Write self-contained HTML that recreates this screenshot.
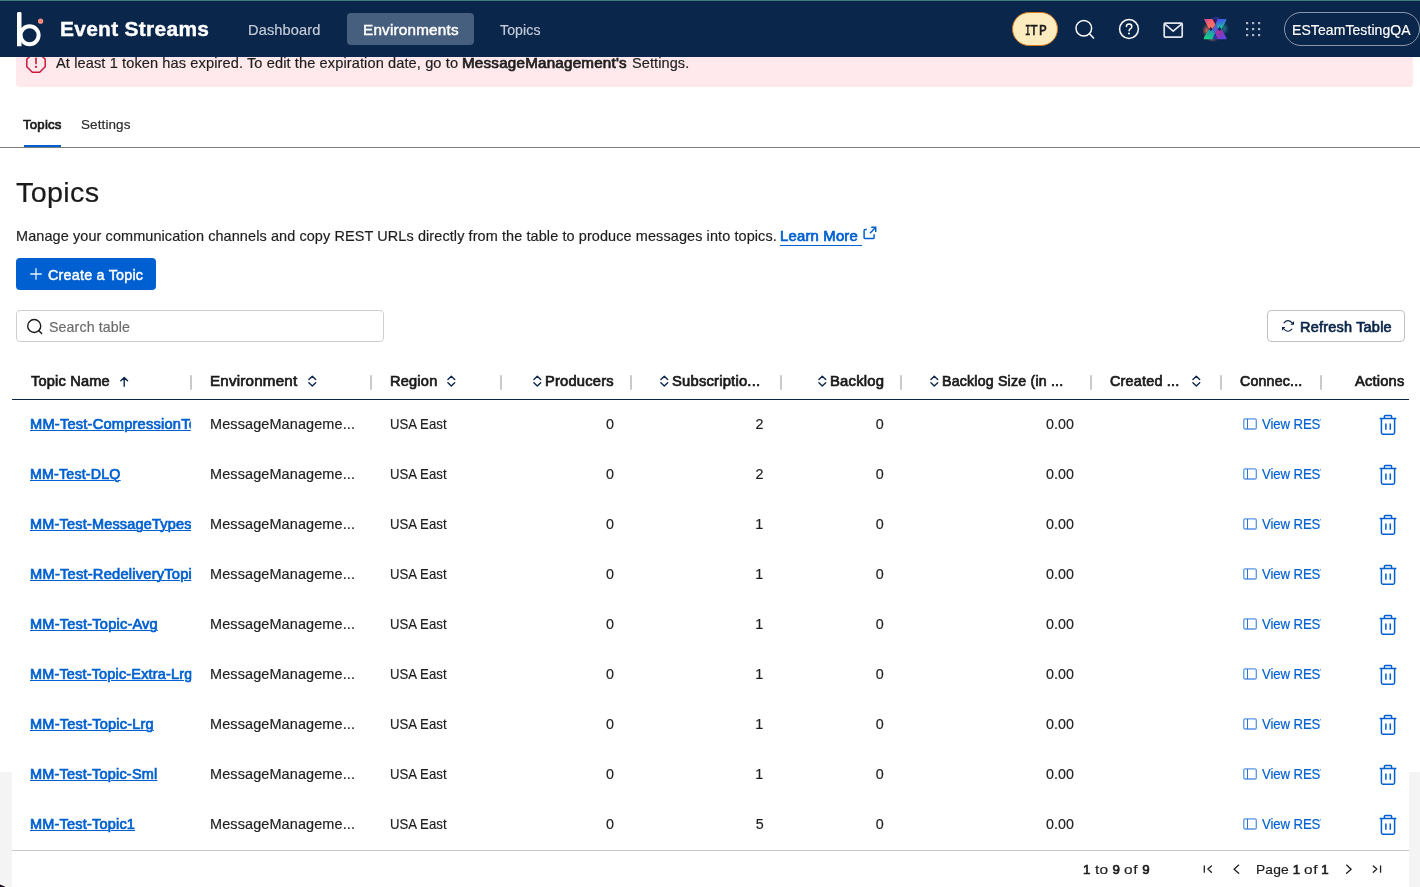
<!DOCTYPE html>
<html><head><meta charset="utf-8"><title>Event Streams</title>
<style>
html,body{margin:0;padding:0;}
body{width:1420px;height:887px;overflow:hidden;position:relative;background:#fff;font-family:'Liberation Sans', sans-serif;}
.t{position:absolute;white-space:nowrap;line-height:20px;height:20px;font-family:'Liberation Sans', sans-serif;}
.u{text-decoration:underline;text-decoration-thickness:1px;text-underline-offset:1px;}
.b{position:absolute;box-sizing:border-box;}
svg{position:absolute;overflow:visible;}
#root{position:absolute;left:0;top:0;width:1420px;height:887px;overflow:hidden;will-change:transform;}
</style></head><body><div id="root">
<!-- footer grey strip behind table -->
<div class="b" style="left:0;top:772px;width:1420px;height:115px;background:#f4f4f4;"></div>
<div class="b" style="left:-39.5px;top:883px;width:59px;height:59px;border-radius:50%;background:#1a0a1e;box-shadow:0 0 0 1.5px #fff;"></div>
<!-- table white area -->
<div class="b" style="left:12px;top:362px;width:1397px;height:525px;background:#fff;"></div>

<!-- alert banner -->
<div class="b" style="left:16px;top:40px;width:1397px;height:47px;background:#ffe9ec;border-radius:4px;"></div>
<svg style="left:26px;top:52.5px;" width="20" height="20" viewBox="0 0 20 20"><path d="M6.3 0.8h7.4l5.5 5.5v7.4l-5.5 5.5H6.3L0.8 13.7V6.3z" fill="none" stroke="#c9183a" stroke-width="1.5" stroke-linejoin="round"/><path d="M10 5.2v5.4" stroke="#c9183a" stroke-width="1.6" stroke-linecap="round"/><circle cx="10" cy="13.9" r="1.05" fill="#c9183a"/></svg>

<!-- header -->
<div class="b" style="left:0;top:0;width:1420px;height:56.5px;background:#0b264b;"></div>
<div class="b" style="left:0;top:0;width:1420px;height:1px;background:#3b7f80;"></div>
<div class="b" style="left:0;top:1px;width:1420px;height:1px;background:#0a2149;"></div>
<!-- logo b -->
<svg style="left:0;top:0;" width="60" height="56" viewBox="0 0 60 56"><path d="M17 13.4a1.4 1.4 0 0 1 1.4-1.5h1.7a1.4 1.4 0 0 1 1.4 1.4V46.2H17z" fill="#fff"/><circle cx="29.6" cy="35.3" r="9" fill="none" stroke="#fff" stroke-width="4"/><circle cx="40.6" cy="21.2" r="2.6" fill="#f58d7b"/></svg>
<!-- nav active pill -->
<div class="b" style="left:347px;top:13px;width:127px;height:32px;background:#475f7f;border-radius:4px;"></div>
<!-- ITP pill -->
<div class="b" style="left:1012px;top:12px;width:46px;height:34px;background:#fdecc0;border:1.5px solid #d4761a;border-radius:17px;"></div>
<!-- search icon -->
<svg style="left:1070px;top:15px;" width="28" height="28" viewBox="0 0 28 28"><circle cx="13.8" cy="13.2" r="7.8" fill="none" stroke="#fff" stroke-width="1.5"/><path d="M19.4 18.8L23.6 23" stroke="#fff" stroke-width="1.5" stroke-linecap="round"/></svg>
<!-- help icon -->
<svg style="left:1117px;top:17px;" width="24" height="24" viewBox="0 0 24 24"><circle cx="12" cy="12" r="9.4" fill="none" stroke="#fff" stroke-width="1.5"/><path d="M9.4 9.6c0-1.6 1.2-2.6 2.7-2.6 1.6 0 2.7 1 2.7 2.4 0 1.3-.8 1.9-1.6 2.4-.7.5-1.1.9-1.1 1.9" fill="none" stroke="#fff" stroke-width="1.5" stroke-linecap="round"/><circle cx="12" cy="16.6" r="1" fill="#fff"/></svg>
<!-- mail icon -->
<svg style="left:1161px;top:19px;" width="24" height="22" viewBox="0 0 24 22"><rect x="3.2" y="4.1" width="18" height="14" rx="1" fill="none" stroke="#e2e6ec" stroke-width="1.7"/><path d="M3.6 4.8l8.6 7.4 8.6-7.4" fill="none" stroke="#e2e6ec" stroke-width="1.7" stroke-linejoin="round"/></svg>
<!-- colorful X logo -->
<svg style="left:1193.8px;top:8.8px;" width="42.4" height="40.3" viewBox="-10 -10 42.4 40.3">
<defs>
<radialGradient id="gl1" cx="0.5" cy="0.5" r="0.5"><stop offset="0" stop-color="#ff7a55" stop-opacity="0.85"/><stop offset="0.5" stop-color="#ff7a55" stop-opacity="0.35"/><stop offset="1" stop-color="#ff7a55" stop-opacity="0"/></radialGradient>
<radialGradient id="gl2" cx="0.5" cy="0.5" r="0.5"><stop offset="0" stop-color="#2fb0b0" stop-opacity="0.55"/><stop offset="1" stop-color="#2fb0b0" stop-opacity="0"/></radialGradient>
<radialGradient id="gl3" cx="0.5" cy="0.5" r="0.5"><stop offset="0" stop-color="#4a55ff" stop-opacity="0.55"/><stop offset="1" stop-color="#4a55ff" stop-opacity="0"/></radialGradient>
<radialGradient id="gl4" cx="0.5" cy="0.5" r="0.5"><stop offset="0" stop-color="#ff7a55" stop-opacity="0.45"/><stop offset="1" stop-color="#ff7a55" stop-opacity="0"/></radialGradient>
<linearGradient id="xa" x1="0" y1="0" x2="0.8" y2="1"><stop offset="0" stop-color="#c63fa6"/><stop offset="0.45" stop-color="#f9636a"/><stop offset="1" stop-color="#ff7658"/></linearGradient>
<linearGradient id="xb" x1="0.2" y1="0" x2="0.6" y2="1"><stop offset="0" stop-color="#5340f0"/><stop offset="0.5" stop-color="#2e86cc"/><stop offset="1" stop-color="#16d68a"/></linearGradient>
<linearGradient id="xc" x1="0.9" y1="0" x2="0.2" y2="1"><stop offset="0" stop-color="#2f7fd6"/><stop offset="0.5" stop-color="#1fae9a"/><stop offset="1" stop-color="#14d882"/></linearGradient>
<linearGradient id="xd" x1="0.1" y1="0" x2="0.9" y2="1"><stop offset="0" stop-color="#c22f96"/><stop offset="0.5" stop-color="#8a38b4"/><stop offset="1" stop-color="#5548f2"/></linearGradient>
</defs>
<ellipse cx="2.6" cy="11.5" rx="4.6" ry="7" fill="url(#gl1)"/>
<ellipse cx="20.3" cy="9.5" rx="4.6" ry="6.5" fill="url(#gl2)"/>
<ellipse cx="12" cy="0.6" rx="6" ry="3.6" fill="url(#gl3)"/>
<ellipse cx="8.5" cy="20.2" rx="6" ry="3" fill="url(#gl4)"/>
<polygon points="8.4,0 13.5,0 11.2,5" fill="#3a1458"/>
<polygon points="8.4,20.3 13.5,20.3 11.2,15.2" fill="#1f3fae"/>
<polygon points="0,0 8.4,0 11.4,5.4 8.7,10 6.7,8.1 5,10.1" fill="url(#xa)"/>
<polygon points="13.5,0 22.4,0 22.4,1.2 17.7,10 15.6,8.1 13.9,10 11.4,5.4" fill="url(#xb)"/>
<polygon points="0,20.3 0,18.6 5,10.1 6.7,12 8.7,10 11.2,14.3 8.4,20.3" fill="url(#xc)"/>
<polygon points="13.5,20.3 22.4,20.3 22.4,19 17.7,10 15.6,12 13.9,10 11.2,14.3" fill="url(#xd)"/>
<polygon points="11.4,5.4 13.9,10 11.2,14.3 8.7,10" fill="#5d5cd8"/>
<polygon points="6.7,8.1 7.9,10 6.7,12 5.5,10" fill="#3a2348"/>
<polygon points="15.6,8.1 16.8,10 15.6,12 14.4,10" fill="#0d2a8a"/>
</svg>
<!-- dots grid -->
<svg style="left:1245px;top:21px;" width="17" height="17" viewBox="0 0 17 17" fill="#aeb7c4"><rect x="1" y="1" width="2.2" height="2.2"/><rect x="7" y="1" width="2.2" height="2.2"/><rect x="13" y="1" width="2.2" height="2.2"/><rect x="1" y="7" width="2.2" height="2.2"/><rect x="7" y="7" width="2.2" height="2.2"/><rect x="13" y="7" width="2.2" height="2.2"/><rect x="1" y="13" width="2.2" height="2.2"/><rect x="7" y="13" width="2.2" height="2.2"/><rect x="13" y="13" width="2.2" height="2.2"/></svg>
<!-- account pill -->
<div class="b" style="left:1284px;top:12px;width:136px;height:34px;border:1px solid #8a97ab;border-radius:17px;"></div>

<!-- tabs -->
<div class="b" style="left:0;top:147px;width:1420px;height:1px;background:#7d7d7d;"></div>
<div class="b" style="left:24px;top:145px;width:37px;height:2px;background:#0060d1;"></div>

<!-- learn more underline + icon -->
<div class="b" style="left:780.3px;top:245px;width:81.7px;height:1.3px;background:#0060d1;"></div>
<svg style="left:862px;top:225px;" width="16" height="16" viewBox="0 0 16 16"><path d="M4.8 4.5H3.2a1.1 1.1 0 0 0-1.1 1.1v6.8a1.1 1.1 0 0 0 1.1 1.1h7.8a1.1 1.1 0 0 0 1.1-1.1V9.2" fill="none" stroke="#0060d1" stroke-width="1.5" stroke-linecap="butt"/><path d="M9.2 2.3h4.5v4.6M13.5 2.5L8 8.2" fill="none" stroke="#0060d1" stroke-width="1.5" stroke-linecap="butt" stroke-linejoin="miter"/></svg>

<!-- create button -->
<div class="b" style="left:16px;top:258px;width:140px;height:32px;background:#0060d1;border-radius:4px;"></div>
<svg style="left:29px;top:267px;" width="14" height="14" viewBox="0 0 14 14"><path d="M7 1.2v11.6M1.2 7h11.6" stroke="#e6effb" stroke-width="1.3" fill="none"/></svg>

<!-- search box -->
<div class="b" style="left:16px;top:310px;width:368px;height:32px;border:1px solid #cfcfcf;border-radius:4px;background:#fff;"></div>
<svg style="left:25px;top:317px;" width="20" height="20" viewBox="0 0 20 20"><circle cx="9.2" cy="9" r="6.5" fill="none" stroke="#1a1a1a" stroke-width="1.4"/><path d="M13.9 13.7L16.7 16.5" stroke="#1a1a1a" stroke-width="1.4" stroke-linecap="round"/></svg>

<!-- refresh button -->
<div class="b" style="left:1267px;top:310px;width:138px;height:32px;border:1px solid #c2c2c2;border-radius:4px;background:#fff;"></div>
<svg style="left:1281px;top:319px;" width="14" height="14" viewBox="0 0 14 14"><path d="M3 3.8Q7.3 -0.8 11.6 4.4M10.9 10.2Q6.55 14.65 2.4 9.5" fill="none" stroke="#0b264b" stroke-width="1.1" stroke-linecap="round"/><path d="M13 2v3.7H9.4zM1 11.8V8.1h3.4z" fill="#0b264b"/></svg>

<!-- table header border -->
<div class="b" style="left:12px;top:398.7px;width:1397px;height:1.3px;background:#0b264b;"></div>
<!-- table bottom border -->
<div class="b" style="left:12px;top:850px;width:1397px;height:1px;background:#c9c9c9;"></div>
<div class="b" style="left:190px;top:375px;width:2px;height:15px;background:#cacaca;border-radius:1px;"></div>
<div class="b" style="left:370px;top:375px;width:2px;height:15px;background:#cacaca;border-radius:1px;"></div>
<div class="b" style="left:500px;top:375px;width:2px;height:15px;background:#cacaca;border-radius:1px;"></div>
<div class="b" style="left:630px;top:375px;width:2px;height:15px;background:#cacaca;border-radius:1px;"></div>
<div class="b" style="left:780px;top:375px;width:2px;height:15px;background:#cacaca;border-radius:1px;"></div>
<div class="b" style="left:900px;top:375px;width:2px;height:15px;background:#cacaca;border-radius:1px;"></div>
<div class="b" style="left:1090px;top:375px;width:2px;height:15px;background:#cacaca;border-radius:1px;"></div>
<div class="b" style="left:1220px;top:375px;width:2px;height:15px;background:#cacaca;border-radius:1px;"></div>
<div class="b" style="left:1320px;top:375px;width:2px;height:15px;background:#cacaca;border-radius:1px;"></div>
<svg style="left:307px;top:374px;" width="11" height="14" viewBox="0 0 11 14"><path d="M1.9 5.4L5.3 2.2 8.7 5.4M1.9 8.8L5.3 12 8.7 8.8" fill="none" stroke="#0b264b" stroke-width="1.4" stroke-linecap="round" stroke-linejoin="round"/></svg>
<svg style="left:446px;top:374px;" width="11" height="14" viewBox="0 0 11 14"><path d="M1.9 5.4L5.3 2.2 8.7 5.4M1.9 8.8L5.3 12 8.7 8.8" fill="none" stroke="#0b264b" stroke-width="1.4" stroke-linecap="round" stroke-linejoin="round"/></svg>
<svg style="left:531.6px;top:374px;" width="11" height="14" viewBox="0 0 11 14"><path d="M1.9 5.4L5.3 2.2 8.7 5.4M1.9 8.8L5.3 12 8.7 8.8" fill="none" stroke="#0b264b" stroke-width="1.4" stroke-linecap="round" stroke-linejoin="round"/></svg>
<svg style="left:659px;top:374px;" width="11" height="14" viewBox="0 0 11 14"><path d="M1.9 5.4L5.3 2.2 8.7 5.4M1.9 8.8L5.3 12 8.7 8.8" fill="none" stroke="#0b264b" stroke-width="1.4" stroke-linecap="round" stroke-linejoin="round"/></svg>
<svg style="left:816.5px;top:374px;" width="11" height="14" viewBox="0 0 11 14"><path d="M1.9 5.4L5.3 2.2 8.7 5.4M1.9 8.8L5.3 12 8.7 8.8" fill="none" stroke="#0b264b" stroke-width="1.4" stroke-linecap="round" stroke-linejoin="round"/></svg>
<svg style="left:928.6px;top:374px;" width="11" height="14" viewBox="0 0 11 14"><path d="M1.9 5.4L5.3 2.2 8.7 5.4M1.9 8.8L5.3 12 8.7 8.8" fill="none" stroke="#0b264b" stroke-width="1.4" stroke-linecap="round" stroke-linejoin="round"/></svg>
<svg style="left:1190.8px;top:374px;" width="11" height="14" viewBox="0 0 11 14"><path d="M1.9 5.4L5.3 2.2 8.7 5.4M1.9 8.8L5.3 12 8.7 8.8" fill="none" stroke="#0b264b" stroke-width="1.4" stroke-linecap="round" stroke-linejoin="round"/></svg>
<svg style="left:119px;top:375px;" width="11" height="13" viewBox="0 0 11 13"><path d="M5.2 11.2V2.6M1.8 5.8L5.2 2.4 8.6 5.8" fill="none" stroke="#0b264b" stroke-width="1.4" stroke-linecap="round" stroke-linejoin="round"/></svg>
<svg style="left:1242px;top:417px;" width="16" height="14" viewBox="0 0 16 14"><rect x="1.8" y="1.9" width="12.5" height="10.1" rx="1.3" fill="none" stroke="#5a95e4" stroke-width="1.3"/><path d="M5.5 2v9.9" stroke="#2a74d8" stroke-width="1"/></svg>
<svg style="left:1378px;top:414px;" width="20" height="22" viewBox="0 0 20 22"><path d="M1.6 4.4h16.8M6.4 4.2V2.6a1 1 0 0 1 1-1h5.2a1 1 0 0 1 1 1v1.6M3.4 4.6v14a1.6 1.6 0 0 0 1.6 1.6h10a1.6 1.6 0 0 0 1.6-1.6v-14M7.9 9.4v6.4M12.3 9.4v6.4" fill="none" stroke="#0060d1" stroke-width="1.5" stroke-linecap="butt"/></svg>
<svg style="left:1242px;top:467px;" width="16" height="14" viewBox="0 0 16 14"><rect x="1.8" y="1.9" width="12.5" height="10.1" rx="1.3" fill="none" stroke="#5a95e4" stroke-width="1.3"/><path d="M5.5 2v9.9" stroke="#2a74d8" stroke-width="1"/></svg>
<svg style="left:1378px;top:464px;" width="20" height="22" viewBox="0 0 20 22"><path d="M1.6 4.4h16.8M6.4 4.2V2.6a1 1 0 0 1 1-1h5.2a1 1 0 0 1 1 1v1.6M3.4 4.6v14a1.6 1.6 0 0 0 1.6 1.6h10a1.6 1.6 0 0 0 1.6-1.6v-14M7.9 9.4v6.4M12.3 9.4v6.4" fill="none" stroke="#0060d1" stroke-width="1.5" stroke-linecap="butt"/></svg>
<svg style="left:1242px;top:517px;" width="16" height="14" viewBox="0 0 16 14"><rect x="1.8" y="1.9" width="12.5" height="10.1" rx="1.3" fill="none" stroke="#5a95e4" stroke-width="1.3"/><path d="M5.5 2v9.9" stroke="#2a74d8" stroke-width="1"/></svg>
<svg style="left:1378px;top:514px;" width="20" height="22" viewBox="0 0 20 22"><path d="M1.6 4.4h16.8M6.4 4.2V2.6a1 1 0 0 1 1-1h5.2a1 1 0 0 1 1 1v1.6M3.4 4.6v14a1.6 1.6 0 0 0 1.6 1.6h10a1.6 1.6 0 0 0 1.6-1.6v-14M7.9 9.4v6.4M12.3 9.4v6.4" fill="none" stroke="#0060d1" stroke-width="1.5" stroke-linecap="butt"/></svg>
<svg style="left:1242px;top:567px;" width="16" height="14" viewBox="0 0 16 14"><rect x="1.8" y="1.9" width="12.5" height="10.1" rx="1.3" fill="none" stroke="#5a95e4" stroke-width="1.3"/><path d="M5.5 2v9.9" stroke="#2a74d8" stroke-width="1"/></svg>
<svg style="left:1378px;top:564px;" width="20" height="22" viewBox="0 0 20 22"><path d="M1.6 4.4h16.8M6.4 4.2V2.6a1 1 0 0 1 1-1h5.2a1 1 0 0 1 1 1v1.6M3.4 4.6v14a1.6 1.6 0 0 0 1.6 1.6h10a1.6 1.6 0 0 0 1.6-1.6v-14M7.9 9.4v6.4M12.3 9.4v6.4" fill="none" stroke="#0060d1" stroke-width="1.5" stroke-linecap="butt"/></svg>
<svg style="left:1242px;top:617px;" width="16" height="14" viewBox="0 0 16 14"><rect x="1.8" y="1.9" width="12.5" height="10.1" rx="1.3" fill="none" stroke="#5a95e4" stroke-width="1.3"/><path d="M5.5 2v9.9" stroke="#2a74d8" stroke-width="1"/></svg>
<svg style="left:1378px;top:614px;" width="20" height="22" viewBox="0 0 20 22"><path d="M1.6 4.4h16.8M6.4 4.2V2.6a1 1 0 0 1 1-1h5.2a1 1 0 0 1 1 1v1.6M3.4 4.6v14a1.6 1.6 0 0 0 1.6 1.6h10a1.6 1.6 0 0 0 1.6-1.6v-14M7.9 9.4v6.4M12.3 9.4v6.4" fill="none" stroke="#0060d1" stroke-width="1.5" stroke-linecap="butt"/></svg>
<svg style="left:1242px;top:667px;" width="16" height="14" viewBox="0 0 16 14"><rect x="1.8" y="1.9" width="12.5" height="10.1" rx="1.3" fill="none" stroke="#5a95e4" stroke-width="1.3"/><path d="M5.5 2v9.9" stroke="#2a74d8" stroke-width="1"/></svg>
<svg style="left:1378px;top:664px;" width="20" height="22" viewBox="0 0 20 22"><path d="M1.6 4.4h16.8M6.4 4.2V2.6a1 1 0 0 1 1-1h5.2a1 1 0 0 1 1 1v1.6M3.4 4.6v14a1.6 1.6 0 0 0 1.6 1.6h10a1.6 1.6 0 0 0 1.6-1.6v-14M7.9 9.4v6.4M12.3 9.4v6.4" fill="none" stroke="#0060d1" stroke-width="1.5" stroke-linecap="butt"/></svg>
<svg style="left:1242px;top:717px;" width="16" height="14" viewBox="0 0 16 14"><rect x="1.8" y="1.9" width="12.5" height="10.1" rx="1.3" fill="none" stroke="#5a95e4" stroke-width="1.3"/><path d="M5.5 2v9.9" stroke="#2a74d8" stroke-width="1"/></svg>
<svg style="left:1378px;top:714px;" width="20" height="22" viewBox="0 0 20 22"><path d="M1.6 4.4h16.8M6.4 4.2V2.6a1 1 0 0 1 1-1h5.2a1 1 0 0 1 1 1v1.6M3.4 4.6v14a1.6 1.6 0 0 0 1.6 1.6h10a1.6 1.6 0 0 0 1.6-1.6v-14M7.9 9.4v6.4M12.3 9.4v6.4" fill="none" stroke="#0060d1" stroke-width="1.5" stroke-linecap="butt"/></svg>
<svg style="left:1242px;top:767px;" width="16" height="14" viewBox="0 0 16 14"><rect x="1.8" y="1.9" width="12.5" height="10.1" rx="1.3" fill="none" stroke="#5a95e4" stroke-width="1.3"/><path d="M5.5 2v9.9" stroke="#2a74d8" stroke-width="1"/></svg>
<svg style="left:1378px;top:764px;" width="20" height="22" viewBox="0 0 20 22"><path d="M1.6 4.4h16.8M6.4 4.2V2.6a1 1 0 0 1 1-1h5.2a1 1 0 0 1 1 1v1.6M3.4 4.6v14a1.6 1.6 0 0 0 1.6 1.6h10a1.6 1.6 0 0 0 1.6-1.6v-14M7.9 9.4v6.4M12.3 9.4v6.4" fill="none" stroke="#0060d1" stroke-width="1.5" stroke-linecap="butt"/></svg>
<svg style="left:1242px;top:817px;" width="16" height="14" viewBox="0 0 16 14"><rect x="1.8" y="1.9" width="12.5" height="10.1" rx="1.3" fill="none" stroke="#5a95e4" stroke-width="1.3"/><path d="M5.5 2v9.9" stroke="#2a74d8" stroke-width="1"/></svg>
<svg style="left:1378px;top:814px;" width="20" height="22" viewBox="0 0 20 22"><path d="M1.6 4.4h16.8M6.4 4.2V2.6a1 1 0 0 1 1-1h5.2a1 1 0 0 1 1 1v1.6M3.4 4.6v14a1.6 1.6 0 0 0 1.6 1.6h10a1.6 1.6 0 0 0 1.6-1.6v-14M7.9 9.4v6.4M12.3 9.4v6.4" fill="none" stroke="#0060d1" stroke-width="1.5" stroke-linecap="butt"/></svg>
<svg style="left:1202px;top:863px;" width="12" height="12" viewBox="0 0 12 12"><path d="M2.3 2.9v6.3M9.4 2.9L5.85 6.05l3.55 3.15" fill="none" stroke="#1f1f1f" stroke-width="1.3" stroke-linecap="round" stroke-linejoin="round"/></svg>
<svg style="left:1231px;top:863px;" width="12" height="12" viewBox="0 0 12 12"><path d="M7.7 2.1L3.05 6.15l4.65 4.05" fill="none" stroke="#1f1f1f" stroke-width="1.3" stroke-linecap="round" stroke-linejoin="round"/></svg>
<svg style="left:1343px;top:863px;" width="12" height="12" viewBox="0 0 12 12"><path d="M3.6 2.1L8.15 6.15 3.6 10.2" fill="none" stroke="#1f1f1f" stroke-width="1.3" stroke-linecap="round" stroke-linejoin="round"/></svg>
<svg style="left:1371px;top:863px;" width="12" height="12" viewBox="0 0 12 12"><path d="M9.55 2.9v6.3M2.3 2.9L5.85 6.05 2.3 9.2" fill="none" stroke="#1f1f1f" stroke-width="1.3" stroke-linecap="round" stroke-linejoin="round"/></svg>

<div class="t" style="left:59.59px;top:18.73px;font-size:21px;font-weight:700;color:#ffffff;letter-spacing:0.300px;transform:scaleX(0.9963);transform-origin:0 0;-webkit-text-stroke:0.4px #fff;">Event Streams</div>
<div class="t" style="left:248.46px;top:20.25px;font-size:14.3px;font-weight:400;color:#c5ccd8;letter-spacing:0.100px;transform:scaleX(1.0227);transform-origin:0 0;-webkit-text-stroke:0.18px #c5ccd8;">Dashboard</div>
<div class="t" style="left:362.63px;top:20.25px;font-size:14.3px;font-weight:400;color:#ffffff;letter-spacing:0.200px;transform:scaleX(1.0665);transform-origin:0 0;-webkit-text-stroke:0.45px #ffffff;">Environments</div>
<div class="t" style="left:500.38px;top:20.25px;font-size:14.3px;font-weight:400;color:#c5ccd8;letter-spacing:0.100px;transform:scaleX(0.9861);transform-origin:0 0;-webkit-text-stroke:0.18px #c5ccd8;">Topics</div>
<div class="t" style="left:1025.23px;top:22.00px;font-size:15px;font-weight:400;color:#1a1a1a;letter-spacing:0.000px;transform:scaleX(0.6207);transform-origin:0 0;font-family:'Liberation Mono', monospace;-webkit-text-stroke:0.6px #1a1a1a;">I</div>
<div class="t" style="left:1030.30px;top:22.00px;font-size:15px;font-weight:400;color:#1a1a1a;letter-spacing:0.000px;transform:scaleX(0.8636);transform-origin:0 0;font-family:'Liberation Mono', monospace;-webkit-text-stroke:0.6px #1a1a1a;">T</div>
<div class="t" style="left:1038.79px;top:22.00px;font-size:15px;font-weight:400;color:#1a1a1a;letter-spacing:0.000px;transform:scaleX(0.8649);transform-origin:0 0;font-family:'Liberation Mono', monospace;-webkit-text-stroke:0.6px #1a1a1a;">P</div>
<div class="t" style="left:1292.11px;top:20.05px;font-size:14.3px;font-weight:400;color:#ffffff;letter-spacing:0.100px;transform:scaleX(0.9770);transform-origin:0 0;-webkit-text-stroke:0.18px #ffffff;">ESTeamTestingQA</div>
<div class="t" style="left:56.25px;top:53.05px;font-size:14.3px;font-weight:400;color:#1e1e1e;letter-spacing:0.100px;transform:scaleX(1.0206);transform-origin:0 0;-webkit-text-stroke:0.18px #1e1e1e;">At least 1 token has expired. To edit the expiration date, go to</div>
<div class="t" style="left:462.41px;top:53.05px;font-size:14.3px;font-weight:400;color:#1e1e1e;letter-spacing:0.200px;transform:scaleX(1.0626);transform-origin:0 0;-webkit-text-stroke:0.7px #1e1e1e;">MessageManagement's</div>
<div class="t" style="left:631.55px;top:53.05px;font-size:14.3px;font-weight:400;color:#1e1e1e;letter-spacing:0.100px;transform:scaleX(1.0145);transform-origin:0 0;-webkit-text-stroke:0.18px #1e1e1e;">Settings.</div>
<div class="t" style="left:23.34px;top:114.50px;font-size:13px;font-weight:400;color:#1a1a1a;letter-spacing:0.200px;transform:scaleX(1.0148);transform-origin:0 0;-webkit-text-stroke:0.7px #1a1a1a;">Topics</div>
<div class="t" style="left:81.28px;top:114.78px;font-size:13.3px;font-weight:400;color:#2a2a2a;letter-spacing:0.100px;transform:scaleX(1.0141);transform-origin:0 0;-webkit-text-stroke:0.18px #2a2a2a;">Settings</div>
<div class="t" style="left:16.45px;top:182.62px;font-size:27px;font-weight:400;color:#1a1a1a;letter-spacing:0.300px;transform:scaleX(1.0643);transform-origin:0 0;-webkit-text-stroke:0.18px #1a1a1a;">Topics</div>
<div class="t" style="left:15.62px;top:225.80px;font-size:14.3px;font-weight:400;color:#1e1e1e;letter-spacing:0.100px;transform:scaleX(1.0105);transform-origin:0 0;-webkit-text-stroke:0.18px #1e1e1e;">Manage your communication channels and copy REST URLs directly from the table to produce messages into topics.</div>
<div class="t" style="left:780.44px;top:225.80px;font-size:14.3px;font-weight:400;color:#0060d1;letter-spacing:0.200px;transform:scaleX(1.0381);transform-origin:0 0;-webkit-text-stroke:0.7px #0060d1;">Learn More</div>
<div class="t" style="left:48.15px;top:265.05px;font-size:14.3px;font-weight:400;color:#ffffff;letter-spacing:0.200px;transform:scaleX(1.0047);transform-origin:0 0;-webkit-text-stroke:0.45px #ffffff;">Create a Topic</div>
<div class="t" style="left:48.86px;top:316.75px;font-size:14.3px;font-weight:400;color:#6b6b6b;letter-spacing:0.100px;transform:scaleX(0.9942);transform-origin:0 0;-webkit-text-stroke:0.18px #6b6b6b;">Search table</div>
<div class="t" style="left:1299.82px;top:316.75px;font-size:14.3px;font-weight:400;color:#0b264b;letter-spacing:0.200px;transform:scaleX(1.0141);transform-origin:0 0;-webkit-text-stroke:0.7px #0b264b;">Refresh Table</div>
<div class="t" style="left:30.52px;top:370.85px;font-size:14.3px;font-weight:400;color:#1a1a1a;letter-spacing:0.200px;transform:scaleX(1.0182);transform-origin:0 0;-webkit-text-stroke:0.7px #1a1a1a;">Topic Name</div>
<div class="t" style="left:209.77px;top:370.85px;font-size:14.3px;font-weight:400;color:#1a1a1a;letter-spacing:0.200px;transform:scaleX(1.0597);transform-origin:0 0;-webkit-text-stroke:0.7px #1a1a1a;">Environment</div>
<div class="t" style="left:389.81px;top:370.85px;font-size:14.3px;font-weight:400;color:#1a1a1a;letter-spacing:0.200px;transform:scaleX(1.0201);transform-origin:0 0;-webkit-text-stroke:0.7px #1a1a1a;">Region</div>
<div class="t" style="left:544.70px;top:370.85px;font-size:14.3px;font-weight:400;color:#1a1a1a;letter-spacing:0.200px;transform:scaleX(1.0279);transform-origin:0 0;-webkit-text-stroke:0.7px #1a1a1a;">Producers</div>
<div class="t" style="left:672.39px;top:370.85px;font-size:14.3px;font-weight:400;color:#1a1a1a;letter-spacing:0.200px;transform:scaleX(1.0330);transform-origin:0 0;-webkit-text-stroke:0.7px #1a1a1a;">Subscriptio...</div>
<div class="t" style="left:829.69px;top:370.85px;font-size:14.3px;font-weight:400;color:#1a1a1a;letter-spacing:0.200px;transform:scaleX(1.0373);transform-origin:0 0;-webkit-text-stroke:0.7px #1a1a1a;">Backlog</div>
<div class="t" style="left:941.74px;top:370.85px;font-size:14.3px;font-weight:400;color:#1a1a1a;letter-spacing:0.200px;transform:scaleX(0.9916);transform-origin:0 0;-webkit-text-stroke:0.7px #1a1a1a;">Backlog Size (in ...</div>
<div class="t" style="left:1110.42px;top:370.85px;font-size:14.3px;font-weight:400;color:#1a1a1a;letter-spacing:0.200px;transform:scaleX(1.0073);transform-origin:0 0;-webkit-text-stroke:0.7px #1a1a1a;">Created ...</div>
<div class="t" style="left:1240.44px;top:370.85px;font-size:14.3px;font-weight:400;color:#1a1a1a;letter-spacing:0.200px;transform:scaleX(0.9911);transform-origin:0 0;-webkit-text-stroke:0.7px #1a1a1a;">Connec...</div>
<div class="t" style="left:1354.60px;top:370.85px;font-size:14.3px;font-weight:400;color:#1a1a1a;letter-spacing:0.200px;transform:scaleX(1.0238);transform-origin:0 0;-webkit-text-stroke:0.7px #1a1a1a;">Actions</div>
<div class="t u" style="left:29.81px;top:413.85px;font-size:14.3px;font-weight:400;color:#0060d1;letter-spacing:0.200px;transform:scaleX(1.0240);transform-origin:0 0;-webkit-text-stroke:0.7px #0060d1;width:157.42px;overflow:hidden;">MM-Test-CompressionTest</div>
<div class="t" style="left:209.62px;top:413.85px;font-size:14.3px;font-weight:400;color:#1e1e1e;letter-spacing:0.100px;transform:scaleX(1.0122);transform-origin:0 0;-webkit-text-stroke:0.18px #1e1e1e;">MessageManageme...</div>
<div class="t" style="left:390.18px;top:413.85px;font-size:14.3px;font-weight:400;color:#1e1e1e;letter-spacing:0.038px;transform:scaleX(0.9200);transform-origin:0 0;-webkit-text-stroke:0.18px #1e1e1e;">USA East</div>
<div class="t" style="left:606.05px;top:413.85px;font-size:14.3px;font-weight:400;color:#1e1e1e;letter-spacing:0.000px;-webkit-text-stroke:0.18px #1e1e1e;">0</div>
<div class="t" style="left:755.58px;top:413.85px;font-size:14.3px;font-weight:400;color:#1e1e1e;letter-spacing:0.000px;-webkit-text-stroke:0.18px #1e1e1e;">2</div>
<div class="t" style="left:875.80px;top:413.85px;font-size:14.3px;font-weight:400;color:#1e1e1e;letter-spacing:0.000px;-webkit-text-stroke:0.18px #1e1e1e;">0</div>
<div class="t" style="left:1046.05px;top:413.85px;font-size:14.3px;font-weight:400;color:#1e1e1e;letter-spacing:0.100px;transform:scaleX(0.9971);transform-origin:0 0;-webkit-text-stroke:0.18px #1e1e1e;">0.00</div>
<div class="t" style="left:1262.10px;top:413.85px;font-size:14.3px;font-weight:400;color:#0060d1;letter-spacing:-0.098px;transform:scaleX(0.9200);transform-origin:0 0;-webkit-text-stroke:0.18px #0060d1;width:63.91px;overflow:hidden;">View REST</div>
<div class="t u" style="left:29.84px;top:463.85px;font-size:14.3px;font-weight:400;color:#0060d1;letter-spacing:0.200px;transform:scaleX(0.9940);transform-origin:0 0;-webkit-text-stroke:0.7px #0060d1;width:162.13px;overflow:hidden;">MM-Test-DLQ</div>
<div class="t" style="left:209.62px;top:463.85px;font-size:14.3px;font-weight:400;color:#1e1e1e;letter-spacing:0.100px;transform:scaleX(1.0122);transform-origin:0 0;-webkit-text-stroke:0.18px #1e1e1e;">MessageManageme...</div>
<div class="t" style="left:390.18px;top:463.85px;font-size:14.3px;font-weight:400;color:#1e1e1e;letter-spacing:0.038px;transform:scaleX(0.9200);transform-origin:0 0;-webkit-text-stroke:0.18px #1e1e1e;">USA East</div>
<div class="t" style="left:606.05px;top:463.85px;font-size:14.3px;font-weight:400;color:#1e1e1e;letter-spacing:0.000px;-webkit-text-stroke:0.18px #1e1e1e;">0</div>
<div class="t" style="left:755.58px;top:463.85px;font-size:14.3px;font-weight:400;color:#1e1e1e;letter-spacing:0.000px;-webkit-text-stroke:0.18px #1e1e1e;">2</div>
<div class="t" style="left:875.80px;top:463.85px;font-size:14.3px;font-weight:400;color:#1e1e1e;letter-spacing:0.000px;-webkit-text-stroke:0.18px #1e1e1e;">0</div>
<div class="t" style="left:1046.05px;top:463.85px;font-size:14.3px;font-weight:400;color:#1e1e1e;letter-spacing:0.100px;transform:scaleX(0.9971);transform-origin:0 0;-webkit-text-stroke:0.18px #1e1e1e;">0.00</div>
<div class="t" style="left:1262.10px;top:463.85px;font-size:14.3px;font-weight:400;color:#0060d1;letter-spacing:-0.098px;transform:scaleX(0.9200);transform-origin:0 0;-webkit-text-stroke:0.18px #0060d1;width:63.91px;overflow:hidden;">View REST</div>
<div class="t u" style="left:29.82px;top:513.85px;font-size:14.3px;font-weight:400;color:#0060d1;letter-spacing:0.200px;transform:scaleX(1.0121);transform-origin:0 0;-webkit-text-stroke:0.7px #0060d1;width:159.26px;overflow:hidden;">MM-Test-MessageTypes</div>
<div class="t" style="left:209.62px;top:513.85px;font-size:14.3px;font-weight:400;color:#1e1e1e;letter-spacing:0.100px;transform:scaleX(1.0122);transform-origin:0 0;-webkit-text-stroke:0.18px #1e1e1e;">MessageManageme...</div>
<div class="t" style="left:390.18px;top:513.85px;font-size:14.3px;font-weight:400;color:#1e1e1e;letter-spacing:0.038px;transform:scaleX(0.9200);transform-origin:0 0;-webkit-text-stroke:0.18px #1e1e1e;">USA East</div>
<div class="t" style="left:606.05px;top:513.85px;font-size:14.3px;font-weight:400;color:#1e1e1e;letter-spacing:0.000px;-webkit-text-stroke:0.18px #1e1e1e;">0</div>
<div class="t" style="left:755.36px;top:513.85px;font-size:14.3px;font-weight:400;color:#1e1e1e;letter-spacing:0.000px;-webkit-text-stroke:0.18px #1e1e1e;">1</div>
<div class="t" style="left:875.80px;top:513.85px;font-size:14.3px;font-weight:400;color:#1e1e1e;letter-spacing:0.000px;-webkit-text-stroke:0.18px #1e1e1e;">0</div>
<div class="t" style="left:1046.05px;top:513.85px;font-size:14.3px;font-weight:400;color:#1e1e1e;letter-spacing:0.100px;transform:scaleX(0.9971);transform-origin:0 0;-webkit-text-stroke:0.18px #1e1e1e;">0.00</div>
<div class="t" style="left:1262.10px;top:513.85px;font-size:14.3px;font-weight:400;color:#0060d1;letter-spacing:-0.098px;transform:scaleX(0.9200);transform-origin:0 0;-webkit-text-stroke:0.18px #0060d1;width:63.91px;overflow:hidden;">View REST</div>
<div class="t u" style="left:29.80px;top:563.85px;font-size:14.3px;font-weight:400;color:#0060d1;letter-spacing:0.200px;transform:scaleX(1.0275);transform-origin:0 0;-webkit-text-stroke:0.7px #0060d1;width:156.88px;overflow:hidden;">MM-Test-RedeliveryTopic</div>
<div class="t" style="left:209.62px;top:563.85px;font-size:14.3px;font-weight:400;color:#1e1e1e;letter-spacing:0.100px;transform:scaleX(1.0122);transform-origin:0 0;-webkit-text-stroke:0.18px #1e1e1e;">MessageManageme...</div>
<div class="t" style="left:390.18px;top:563.85px;font-size:14.3px;font-weight:400;color:#1e1e1e;letter-spacing:0.038px;transform:scaleX(0.9200);transform-origin:0 0;-webkit-text-stroke:0.18px #1e1e1e;">USA East</div>
<div class="t" style="left:606.05px;top:563.85px;font-size:14.3px;font-weight:400;color:#1e1e1e;letter-spacing:0.000px;-webkit-text-stroke:0.18px #1e1e1e;">0</div>
<div class="t" style="left:755.36px;top:563.85px;font-size:14.3px;font-weight:400;color:#1e1e1e;letter-spacing:0.000px;-webkit-text-stroke:0.18px #1e1e1e;">1</div>
<div class="t" style="left:875.80px;top:563.85px;font-size:14.3px;font-weight:400;color:#1e1e1e;letter-spacing:0.000px;-webkit-text-stroke:0.18px #1e1e1e;">0</div>
<div class="t" style="left:1046.05px;top:563.85px;font-size:14.3px;font-weight:400;color:#1e1e1e;letter-spacing:0.100px;transform:scaleX(0.9971);transform-origin:0 0;-webkit-text-stroke:0.18px #1e1e1e;">0.00</div>
<div class="t" style="left:1262.10px;top:563.85px;font-size:14.3px;font-weight:400;color:#0060d1;letter-spacing:-0.098px;transform:scaleX(0.9200);transform-origin:0 0;-webkit-text-stroke:0.18px #0060d1;width:63.91px;overflow:hidden;">View REST</div>
<div class="t u" style="left:29.81px;top:613.85px;font-size:14.3px;font-weight:400;color:#0060d1;letter-spacing:0.200px;transform:scaleX(1.0195);transform-origin:0 0;-webkit-text-stroke:0.7px #0060d1;width:158.11px;overflow:hidden;">MM-Test-Topic-Avg</div>
<div class="t" style="left:209.62px;top:613.85px;font-size:14.3px;font-weight:400;color:#1e1e1e;letter-spacing:0.100px;transform:scaleX(1.0122);transform-origin:0 0;-webkit-text-stroke:0.18px #1e1e1e;">MessageManageme...</div>
<div class="t" style="left:390.18px;top:613.85px;font-size:14.3px;font-weight:400;color:#1e1e1e;letter-spacing:0.038px;transform:scaleX(0.9200);transform-origin:0 0;-webkit-text-stroke:0.18px #1e1e1e;">USA East</div>
<div class="t" style="left:606.05px;top:613.85px;font-size:14.3px;font-weight:400;color:#1e1e1e;letter-spacing:0.000px;-webkit-text-stroke:0.18px #1e1e1e;">0</div>
<div class="t" style="left:755.36px;top:613.85px;font-size:14.3px;font-weight:400;color:#1e1e1e;letter-spacing:0.000px;-webkit-text-stroke:0.18px #1e1e1e;">1</div>
<div class="t" style="left:875.80px;top:613.85px;font-size:14.3px;font-weight:400;color:#1e1e1e;letter-spacing:0.000px;-webkit-text-stroke:0.18px #1e1e1e;">0</div>
<div class="t" style="left:1046.05px;top:613.85px;font-size:14.3px;font-weight:400;color:#1e1e1e;letter-spacing:0.100px;transform:scaleX(0.9971);transform-origin:0 0;-webkit-text-stroke:0.18px #1e1e1e;">0.00</div>
<div class="t" style="left:1262.10px;top:613.85px;font-size:14.3px;font-weight:400;color:#0060d1;letter-spacing:-0.098px;transform:scaleX(0.9200);transform-origin:0 0;-webkit-text-stroke:0.18px #0060d1;width:63.91px;overflow:hidden;">View REST</div>
<div class="t u" style="left:29.82px;top:663.85px;font-size:14.3px;font-weight:400;color:#0060d1;letter-spacing:0.200px;transform:scaleX(1.0086);transform-origin:0 0;-webkit-text-stroke:0.7px #0060d1;width:159.80px;overflow:hidden;">MM-Test-Topic-Extra-Lrg</div>
<div class="t" style="left:209.62px;top:663.85px;font-size:14.3px;font-weight:400;color:#1e1e1e;letter-spacing:0.100px;transform:scaleX(1.0122);transform-origin:0 0;-webkit-text-stroke:0.18px #1e1e1e;">MessageManageme...</div>
<div class="t" style="left:390.18px;top:663.85px;font-size:14.3px;font-weight:400;color:#1e1e1e;letter-spacing:0.038px;transform:scaleX(0.9200);transform-origin:0 0;-webkit-text-stroke:0.18px #1e1e1e;">USA East</div>
<div class="t" style="left:606.05px;top:663.85px;font-size:14.3px;font-weight:400;color:#1e1e1e;letter-spacing:0.000px;-webkit-text-stroke:0.18px #1e1e1e;">0</div>
<div class="t" style="left:755.36px;top:663.85px;font-size:14.3px;font-weight:400;color:#1e1e1e;letter-spacing:0.000px;-webkit-text-stroke:0.18px #1e1e1e;">1</div>
<div class="t" style="left:875.80px;top:663.85px;font-size:14.3px;font-weight:400;color:#1e1e1e;letter-spacing:0.000px;-webkit-text-stroke:0.18px #1e1e1e;">0</div>
<div class="t" style="left:1046.05px;top:663.85px;font-size:14.3px;font-weight:400;color:#1e1e1e;letter-spacing:0.100px;transform:scaleX(0.9971);transform-origin:0 0;-webkit-text-stroke:0.18px #1e1e1e;">0.00</div>
<div class="t" style="left:1262.10px;top:663.85px;font-size:14.3px;font-weight:400;color:#0060d1;letter-spacing:-0.098px;transform:scaleX(0.9200);transform-origin:0 0;-webkit-text-stroke:0.18px #0060d1;width:63.91px;overflow:hidden;">View REST</div>
<div class="t u" style="left:29.81px;top:713.85px;font-size:14.3px;font-weight:400;color:#0060d1;letter-spacing:0.200px;transform:scaleX(1.0177);transform-origin:0 0;-webkit-text-stroke:0.7px #0060d1;width:158.38px;overflow:hidden;">MM-Test-Topic-Lrg</div>
<div class="t" style="left:209.62px;top:713.85px;font-size:14.3px;font-weight:400;color:#1e1e1e;letter-spacing:0.100px;transform:scaleX(1.0122);transform-origin:0 0;-webkit-text-stroke:0.18px #1e1e1e;">MessageManageme...</div>
<div class="t" style="left:390.18px;top:713.85px;font-size:14.3px;font-weight:400;color:#1e1e1e;letter-spacing:0.038px;transform:scaleX(0.9200);transform-origin:0 0;-webkit-text-stroke:0.18px #1e1e1e;">USA East</div>
<div class="t" style="left:606.05px;top:713.85px;font-size:14.3px;font-weight:400;color:#1e1e1e;letter-spacing:0.000px;-webkit-text-stroke:0.18px #1e1e1e;">0</div>
<div class="t" style="left:755.36px;top:713.85px;font-size:14.3px;font-weight:400;color:#1e1e1e;letter-spacing:0.000px;-webkit-text-stroke:0.18px #1e1e1e;">1</div>
<div class="t" style="left:875.80px;top:713.85px;font-size:14.3px;font-weight:400;color:#1e1e1e;letter-spacing:0.000px;-webkit-text-stroke:0.18px #1e1e1e;">0</div>
<div class="t" style="left:1046.05px;top:713.85px;font-size:14.3px;font-weight:400;color:#1e1e1e;letter-spacing:0.100px;transform:scaleX(0.9971);transform-origin:0 0;-webkit-text-stroke:0.18px #1e1e1e;">0.00</div>
<div class="t" style="left:1262.10px;top:713.85px;font-size:14.3px;font-weight:400;color:#0060d1;letter-spacing:-0.098px;transform:scaleX(0.9200);transform-origin:0 0;-webkit-text-stroke:0.18px #0060d1;width:63.91px;overflow:hidden;">View REST</div>
<div class="t u" style="left:29.82px;top:763.85px;font-size:14.3px;font-weight:400;color:#0060d1;letter-spacing:0.200px;transform:scaleX(1.0138);transform-origin:0 0;-webkit-text-stroke:0.7px #0060d1;width:158.99px;overflow:hidden;">MM-Test-Topic-Sml</div>
<div class="t" style="left:209.62px;top:763.85px;font-size:14.3px;font-weight:400;color:#1e1e1e;letter-spacing:0.100px;transform:scaleX(1.0122);transform-origin:0 0;-webkit-text-stroke:0.18px #1e1e1e;">MessageManageme...</div>
<div class="t" style="left:390.18px;top:763.85px;font-size:14.3px;font-weight:400;color:#1e1e1e;letter-spacing:0.038px;transform:scaleX(0.9200);transform-origin:0 0;-webkit-text-stroke:0.18px #1e1e1e;">USA East</div>
<div class="t" style="left:606.05px;top:763.85px;font-size:14.3px;font-weight:400;color:#1e1e1e;letter-spacing:0.000px;-webkit-text-stroke:0.18px #1e1e1e;">0</div>
<div class="t" style="left:755.36px;top:763.85px;font-size:14.3px;font-weight:400;color:#1e1e1e;letter-spacing:0.000px;-webkit-text-stroke:0.18px #1e1e1e;">1</div>
<div class="t" style="left:875.80px;top:763.85px;font-size:14.3px;font-weight:400;color:#1e1e1e;letter-spacing:0.000px;-webkit-text-stroke:0.18px #1e1e1e;">0</div>
<div class="t" style="left:1046.05px;top:763.85px;font-size:14.3px;font-weight:400;color:#1e1e1e;letter-spacing:0.100px;transform:scaleX(0.9971);transform-origin:0 0;-webkit-text-stroke:0.18px #1e1e1e;">0.00</div>
<div class="t" style="left:1262.10px;top:763.85px;font-size:14.3px;font-weight:400;color:#0060d1;letter-spacing:-0.098px;transform:scaleX(0.9200);transform-origin:0 0;-webkit-text-stroke:0.18px #0060d1;width:63.91px;overflow:hidden;">View REST</div>
<div class="t u" style="left:29.82px;top:813.85px;font-size:14.3px;font-weight:400;color:#0060d1;letter-spacing:0.200px;transform:scaleX(1.0135);transform-origin:0 0;-webkit-text-stroke:0.7px #0060d1;width:159.03px;overflow:hidden;">MM-Test-Topic1</div>
<div class="t" style="left:209.62px;top:813.85px;font-size:14.3px;font-weight:400;color:#1e1e1e;letter-spacing:0.100px;transform:scaleX(1.0122);transform-origin:0 0;-webkit-text-stroke:0.18px #1e1e1e;">MessageManageme...</div>
<div class="t" style="left:390.18px;top:813.85px;font-size:14.3px;font-weight:400;color:#1e1e1e;letter-spacing:0.038px;transform:scaleX(0.9200);transform-origin:0 0;-webkit-text-stroke:0.18px #1e1e1e;">USA East</div>
<div class="t" style="left:606.05px;top:813.85px;font-size:14.3px;font-weight:400;color:#1e1e1e;letter-spacing:0.000px;-webkit-text-stroke:0.18px #1e1e1e;">0</div>
<div class="t" style="left:755.80px;top:813.85px;font-size:14.3px;font-weight:400;color:#1e1e1e;letter-spacing:0.000px;-webkit-text-stroke:0.18px #1e1e1e;">5</div>
<div class="t" style="left:875.80px;top:813.85px;font-size:14.3px;font-weight:400;color:#1e1e1e;letter-spacing:0.000px;-webkit-text-stroke:0.18px #1e1e1e;">0</div>
<div class="t" style="left:1046.05px;top:813.85px;font-size:14.3px;font-weight:400;color:#1e1e1e;letter-spacing:0.100px;transform:scaleX(0.9971);transform-origin:0 0;-webkit-text-stroke:0.18px #1e1e1e;">0.00</div>
<div class="t" style="left:1262.10px;top:813.85px;font-size:14.3px;font-weight:400;color:#0060d1;letter-spacing:-0.098px;transform:scaleX(0.9200);transform-origin:0 0;-webkit-text-stroke:0.18px #0060d1;width:63.91px;overflow:hidden;">View REST</div>
<div class="t" style="left:1083.12px;top:860.27px;font-size:13.3px;font-weight:400;color:#1e1e1e;letter-spacing:0.000px;-webkit-text-stroke:0.7px #1e1e1e;">1</div>
<div class="t" style="left:1095.30px;top:860.27px;font-size:13.3px;font-weight:400;color:#1e1e1e;letter-spacing:0.137px;transform:scaleX(1.1600);transform-origin:0 0;-webkit-text-stroke:0.18px #1e1e1e;">to</div>
<div class="t" style="left:1112.53px;top:860.27px;font-size:13.3px;font-weight:400;color:#1e1e1e;letter-spacing:0.000px;-webkit-text-stroke:0.7px #1e1e1e;">9</div>
<div class="t" style="left:1124.32px;top:860.27px;font-size:13.3px;font-weight:400;color:#1e1e1e;letter-spacing:0.657px;transform:scaleX(1.1600);transform-origin:0 0;-webkit-text-stroke:0.18px #1e1e1e;">of</div>
<div class="t" style="left:1142.33px;top:860.27px;font-size:13.3px;font-weight:400;color:#1e1e1e;letter-spacing:0.000px;-webkit-text-stroke:0.7px #1e1e1e;">9</div>
<div class="t" style="left:1255.82px;top:860.27px;font-size:13.3px;font-weight:400;color:#1e1e1e;letter-spacing:0.100px;transform:scaleX(1.0408);transform-origin:0 0;-webkit-text-stroke:0.18px #1e1e1e;">Page</div>
<div class="t" style="left:1292.72px;top:860.27px;font-size:13.3px;font-weight:400;color:#1e1e1e;letter-spacing:0.000px;-webkit-text-stroke:0.7px #1e1e1e;">1</div>
<div class="t" style="left:1304.12px;top:860.27px;font-size:13.3px;font-weight:400;color:#1e1e1e;letter-spacing:0.485px;transform:scaleX(1.1600);transform-origin:0 0;-webkit-text-stroke:0.18px #1e1e1e;">of</div>
<div class="t" style="left:1321.32px;top:860.27px;font-size:13.3px;font-weight:400;color:#1e1e1e;letter-spacing:0.000px;-webkit-text-stroke:0.7px #1e1e1e;">1</div>
</div></body></html>
